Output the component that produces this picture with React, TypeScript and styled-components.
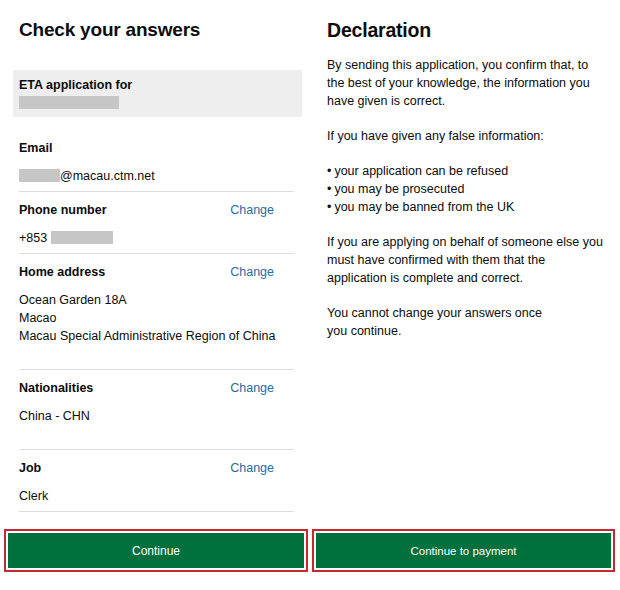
import React from "react";
import styled, { createGlobalStyle } from "styled-components";

const Global = createGlobalStyle`
  html, body { margin: 0; padding: 0; background: #ffffff; }
  body { font-family: "Liberation Sans", Arial, sans-serif; color: #0b0c0c; }
  * { box-sizing: border-box; }
`;

const Page = styled.div`
  display: grid;
  grid-template-columns: 304px 303px;
  column-gap: 4px;
  padding: 0 5px 0 4px;
  width: 620px;
  height: 590px;
  overflow: hidden;
`;

const Column = styled.section`
  display: flex;
  flex-direction: column;
  padding-bottom: 18px;
  min-height: 0;
`;

const Content = styled.div<{ $pad: number }>`
  padding: 0 ${(p) => p.$pad}px 0 15px;
  flex: 1;
`;

const Heading = styled.h1<{ $size: number }>`
  margin: 0;
  padding-top: 18px;
  font-size: ${(p) => p.$size}px;
  line-height: 24px;
  font-weight: 700;
  letter-spacing: -0.2px;
`;

const Banner = styled.div`
  margin: 28px -8px 0 -6px;
  background: #eeeeee;
  height: 47px;
  padding: 7px 6px 0;
`;

const BannerTitle = styled.div`
  font-size: 12.5px;
  font-weight: 700;
  line-height: 16px;
`;

const Redacted = styled.span<{ $w: number }>`
  display: inline-block;
  width: ${(p) => p.$w}px;
  height: 13px;
  background: #c6c6c6;
  vertical-align: -2px;
`;

const List = styled.div`
  margin-top: 13px;
`;

const Row = styled.div<{ $extra?: boolean }>`
  border-bottom: 1px solid #dcdcdc;
  padding: 9px 0 ${(p) => (p.$extra ? 24 : 6)}px;
  display: grid;
  grid-template-columns: 1fr auto;
  row-gap: 10px;
`;

const Label = styled.div`
  font-size: 12.5px;
  font-weight: 700;
  line-height: 18px;
`;

const Change = styled.a`
  font-size: 12.5px;
  line-height: 18px;
  color: #2a6aa8;
  text-decoration: none;
  margin-right: 20px;
`;

const Value = styled.div`
  grid-column: 1 / -1;
  font-size: 12.5px;
  line-height: 18px;
`;

const Para = styled.p<{ $first?: boolean }>`
  margin: ${(p) => (p.$first ? 14 : 0)}px 0 17px;
  font-size: 12.5px;
  line-height: 18px;
`;

const Bullets = styled.ul`
  margin: 0 0 17px;
  padding: 0;
  list-style: none;
  font-size: 12.5px;
  line-height: 18px;
  li::before {
    content: "•";
    margin-right: 3px;
  }
`;

const Frame = styled.div`
  margin-top: 12px;
  border: 2px solid #c22a33;
  padding: 2px;
  background: #ffffff;
`;

const GreenButton = styled.button<{ $size: number }>`
  display: block;
  width: 100%;
  height: 35px;
  border: none;
  background: #00703c;
  color: #ffffff;
  font-family: "Liberation Sans", Arial, sans-serif;
  font-size: ${(p) => p.$size}px;
  cursor: pointer;
`;

type Item = { label: string; value: React.ReactNode; change?: boolean; extra?: boolean };

const items: Item[] = [
  { label: "Email", value: <><Redacted $w={41} />@macau.ctm.net</> },
  { label: "Phone number", value: <>+853 <Redacted $w={62} /></>, change: true },
  {
    label: "Home address",
    value: (
      <>
        Ocean Garden 18A
        <br />
        Macao
        <br />
        Macau Special Administrative Region of China
      </>
    ),
    change: true,
    extra: true,
  },
  { label: "Nationalities", value: "China - CHN", change: true, extra: true },
  { label: "Job", value: "Clerk", change: true },
];

export default function App() {
  return (
    <>
      <Global />
      <Page>
        <Column>
          <Content $pad={14}>
            <Heading $size={19}>Check your answers</Heading>
            <Banner>
              <BannerTitle>ETA application for</BannerTitle>
              <Redacted $w={100} />
            </Banner>
            <List>
              {items.map((it) => (
                <Row key={it.label} $extra={it.extra}>
                  <Label>{it.label}</Label>
                  {it.change ? <Change href="#">Change</Change> : <span />}
                  <Value>{it.value}</Value>
                </Row>
              ))}
            </List>
          </Content>
          <Frame>
            <GreenButton $size={12}>Continue</GreenButton>
          </Frame>
        </Column>
        <Column>
          <Content $pad={12}>
            <Heading $size={19.5}>Declaration</Heading>
            <Para $first>
              By sending this application, you confirm that, to the best of your knowledge, the information you
              have given is correct.
            </Para>
            <Para>If you have given any false information:</Para>
            <Bullets>
              <li>your application can be refused</li>
              <li>you may be prosecuted</li>
              <li>you may be banned from the UK</li>
            </Bullets>
            <Para>
              If you are applying on behalf of someone else you must have confirmed with them that the
              application is complete and correct.
            </Para>
            <Para>
              You cannot change your answers once
              <br />
              you continue.
            </Para>
          </Content>
          <Frame>
            <GreenButton $size={11.5}>Continue to payment</GreenButton>
          </Frame>
        </Column>
      </Page>
    </>
  );
}
